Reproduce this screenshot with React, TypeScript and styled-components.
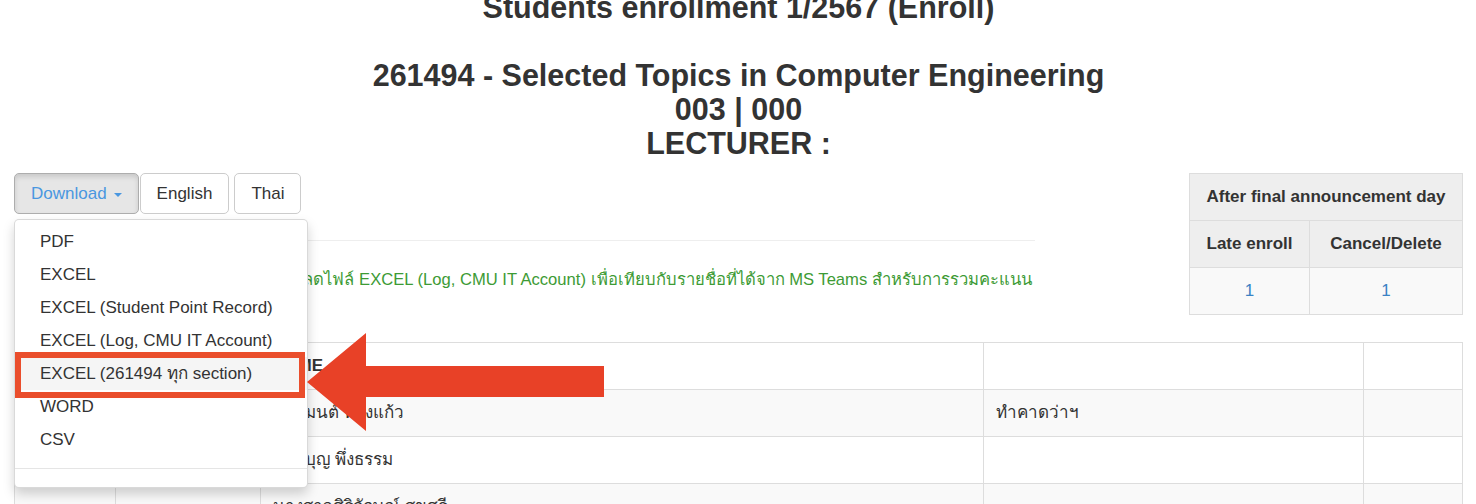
import styled, { createGlobalStyle } from "styled-components";

const GlobalStyle = createGlobalStyle`
  body {
    margin: 0;
    background: #fff;
    color: #333;
    font-family: "Liberation Sans", Arial, "Noto Sans", sans-serif;
    overflow: hidden;
  }
`;

const Page = styled.div`
  padding: 0 13px 0 14px;
`;

const Heading = styled.h3`
  margin: -10px 0 13px;
  text-align: center;
  font-size: 30.5px;
  line-height: 34px;
  font-weight: bold;
  color: #333;
`;

const TopRow = styled.div`
  display: flex;
  justify-content: space-between;
  align-items: flex-start;
`;

const LeftCol = styled.div`
  width: 1021px;
`;

const Toolbar = styled.div`
  position: relative;
  display: flex;
  align-items: flex-start;
`;

const Button = styled.button<{ $active?: boolean; $gap?: number }>`
  height: 41px;
  padding: 0 16px;
  margin-right: ${(p) => p.$gap ?? 0}px;
  font-family: inherit;
  font-size: 17px;
  line-height: 39px;
  border-radius: 5px;
  border: 1px solid ${(p) => (p.$active ? "#adadad" : "#ccc")};
  background: ${(p) => (p.$active ? "#e6e6e6" : "#fff")};
  color: ${(p) => (p.$active ? "#4a97e0" : "#333")};
  box-shadow: ${(p) => (p.$active ? "inset 0 3px 5px rgba(0,0,0,.125)" : "none")};
  display: flex;
  align-items: center;
  gap: 7px;
`;

const Caret = styled.span`
  width: 0;
  height: 0;
  border-left: 4px solid transparent;
  border-right: 4px solid transparent;
  border-top: 4px solid #4a97e0;
  margin-top: 2px;
`;

const Menu = styled.ul`
  position: absolute;
  top: 46px;
  left: 0;
  width: 294px;
  height: 269px;
  margin: 0;
  padding: 5px 0;
  list-style: none;
  background: #fff;
  border: 1px solid rgba(0, 0, 0, 0.15);
  border-radius: 5px;
  box-shadow: 0 6px 12px rgba(0, 0, 0, 0.175);
  box-sizing: border-box;
  z-index: 10;
`;

const MenuItem = styled.li<{ $active?: boolean }>`
  height: 33px;
  line-height: 33px;
  padding: 0 25px;
  font-size: 17px;
  color: #333;
  white-space: nowrap;
  background: ${(p) => (p.$active ? "#f5f5f5" : "transparent")};
`;

const MenuDivider = styled.li`
  height: 1px;
  margin: 12px 0;
  background: #e5e5e5;
`;

// annotation drawn over the menu
const Highlight = styled.div`
  position: absolute;
  top: 179px;
  left: 1px;
  width: 290px;
  height: 46px;
  box-sizing: border-box;
  border: 6px solid #ea4e2c;
  z-index: 11;
`;

const Arrow = styled.svg`
  position: absolute;
  top: 160px;
  left: 293px;
  z-index: 11;
`;

const Rule = styled.hr`
  margin: 26px 0 0;
  border: 0;
  border-top: 1px solid #eee;
`;

const Note = styled.p`
  margin: 27px 0 0;
  font-size: 16.6px;
  line-height: 24px;
  color: #3d9b35;
  white-space: nowrap;
`;

const Table = styled.table<{ $width?: string }>`
  width: ${(p) => p.$width ?? "100%"};
  border-collapse: collapse;
  table-layout: fixed;
  font-size: 17px;
`;

const Th = styled.th<{ $bg?: string }>`
  border: 1px solid #ddd;
  padding: 11px 12px;
  line-height: 24px;
  font-weight: bold;
  text-align: ${(p) => (p.$bg ? "center" : "left")};
  background: ${(p) => p.$bg ?? "#fff"};
  white-space: nowrap;
`;

const Row = styled.tr<{ $striped?: boolean }>`
  background: ${(p) => (p.$striped ? "#f9f9f9" : "#fff")};
`;

const Td = styled.td<{ $center?: boolean }>`
  border: 1px solid #ddd;
  padding: 11px 12px;
  line-height: 24px;
  text-align: ${(p) => (p.$center ? "center" : "left")};
  white-space: nowrap;
  overflow: hidden;
`;

const Count = styled.a`
  color: #3b82c4;
  text-decoration: none;
`;

const MainTable = styled(Table)`
  margin-top: 27px;
`;

const menuItems = [
  "PDF",
  "EXCEL",
  "EXCEL (Student Point Record)",
  "EXCEL (Log, CMU IT Account)",
  "EXCEL (261494 ทุก section)",
  "WORD",
  "CSV",
];

const students = [
  { name: "นายมนต์ ทองแก้ว", note: "ทำคาดว่าฯ" },
  { name: "นายบุญ พึ่งธรรม", note: "" },
  { name: "นางสาวศิริลักษณ์ สุขศรี", note: "" },
];

export default function App() {
  return (
    <Page>
      <GlobalStyle />
      <Heading>
        Students enrollment 1/2567 (Enroll)
        <br />
        <br />
        261494 - Selected Topics in Computer Engineering
        <br />
        003 | 000
        <br />
        LECTURER :
      </Heading>

      <TopRow>
        <LeftCol>
          <Toolbar>
            <Button $active $gap={1}>
              Download <Caret />
            </Button>
            <Button $gap={5}>English</Button>
            <Button>Thai</Button>

            <Menu>
              {menuItems.map((item, i) => (
                <MenuItem key={item} $active={i === 4}>
                  {item}
                </MenuItem>
              ))}
              <MenuDivider />
            </Menu>
            <Highlight />
            <Arrow width="297" height="98" viewBox="0 0 297 98">
              <polygon
                points="0,49 59,0 59,33 297,33 297,64 59,64 59,98"
                fill="#e84127"
              />
            </Arrow>
          </Toolbar>
          <Rule />
          <Note>
            1. อาจารย์ผู้สอนสามารถเลือกให้ดาวน์โหลดไฟล์ EXCEL (Log, CMU IT Account) เพื่อเทียบกับรายชื่อที่ได้จาก MS Teams สำหรับการรวมคะแนน
          </Note>
        </LeftCol>

        <Table $width="274px">
          <colgroup>
            <col style={{ width: 120 }} />
            <col />
          </colgroup>
          <thead>
            <tr>
              <Th $bg="#eee" colSpan={2}>
                After final announcement day
              </Th>
            </tr>
            <tr>
              <Th $bg="#eee">Late enroll</Th>
              <Th $bg="#eee">Cancel/Delete</Th>
            </tr>
          </thead>
          <tbody>
            <Row $striped>
              <Td $center>
                <Count href="#">1</Count>
              </Td>
              <Td $center>
                <Count href="#">1</Count>
              </Td>
            </Row>
          </tbody>
        </Table>
      </TopRow>

      <MainTable>
        <colgroup>
          <col style={{ width: 101 }} />
          <col style={{ width: 145 }} />
          <col style={{ width: 723 }} />
          <col style={{ width: 380 }} />
          <col />
        </colgroup>
        <thead>
          <tr>
            <Th>No.</Th>
            <Th>ID</Th>
            <Th>NAME</Th>
            <Th />
            <Th />
          </tr>
        </thead>
        <tbody>
          {students.map((s, i) => (
            <Row key={s.name} $striped={i % 2 === 0}>
              <Td />
              <Td />
              <Td>{s.name}</Td>
              <Td>{s.note}</Td>
              <Td />
            </Row>
          ))}
        </tbody>
      </MainTable>
    </Page>
  );
}
